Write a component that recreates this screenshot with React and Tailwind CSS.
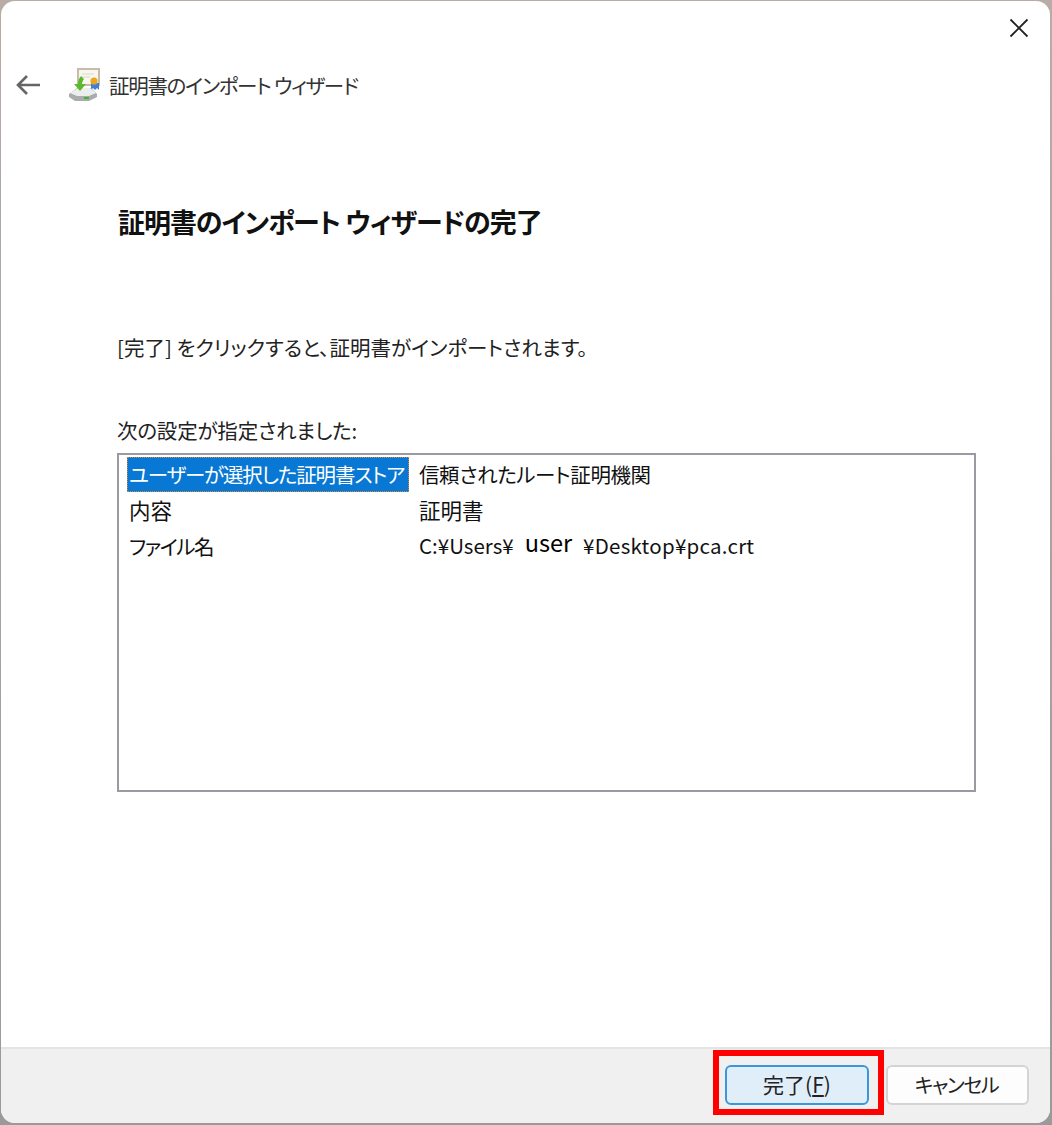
import React from 'react';

const jp = '[font-family:"Noto_Sans_CJK_JP","Noto_Sans",sans-serif] [font-feature-settings:"palt"]';

const rows = [
  { name: 'ユーザーが選択した証明書ストア', nameCls: 'pl-[1px] tracking-[-1.15px]', value: '信頼されたルート証明機関', valueCls: 'tracking-[-0.4px]', selected: true },
  { name: '内容', nameCls: 'pl-[2px] text-[21.5px]', value: '証明書', valueCls: 'text-[21.5px]' },
  { name: 'ファイル名', nameCls: 'pl-[2px] tracking-[-1.5px]', value: null, valueCls: '' },
];

const CertIcon = () => (
  <svg width="36" height="36" viewBox="0 0 36 36" className="blur-[0.5px]">
    <rect x="10" y="3" width="21" height="16" fill="#f8f6ef" stroke="#c6bcaa" strokeWidth="2" />
    <path d="M14 8h12M14 11h8" stroke="#ddd8cc" strokeWidth="1" />
    <path d="M23 17v7l2-2 2 2 2-2 2 2v-7z" fill="#3f7fd8" />
    <circle cx="26" cy="15" r="3.6" fill="#eda51f" />
    <path d="M1 28l8-6h14l6 6v3l-8 4H7l-6-4z" fill="#a9adad" />
    <path d="M2 27l8-5h12l6 5-7 3H9z" fill="#eceeee" />
    <rect x="16" y="31" width="5" height="2" fill="#45b035" />
    <path d="M13 10c-2 2-3 5-3 8H6l6 7 6-7h-4c0-2 1-4 2-5z" fill="#5cb82c" />
  </svg>
);

export default function App() {
  return (
    <div className={`w-[1052px] h-[1125px] bg-[#bdb0a8] ${jp}`}>
      <div className="w-full h-full pt-[1px] pb-[2px] pl-[1px] pr-[2px] bg-[linear-gradient(to_bottom,#b8aca6_0%,#9a9a9a_100%)]">
        <div className="w-full h-full flex flex-col bg-white rounded-[14px] overflow-hidden">
          <div className="flex justify-end pt-[17px] pr-[21px] h-[53px]">
            <svg width="20" height="20" viewBox="0 0 20 20" fill="none" stroke="#222" strokeWidth="1.8">
              <path d="M1.5 1.5l17 17M18.5 1.5l-17 17" />
            </svg>
          </div>

          <div className="flex items-center h-[62px] pl-[15px]">
            <svg width="26" height="22" viewBox="0 0 26 22" fill="none" stroke="#666" strokeWidth="2.6">
              <path d="M24 11H2M11 2l-9 9 9 9" />
            </svg>
            <div className="ml-[26px] mt-[-2px]"><CertIcon /></div>
            <span className="ml-[5px] text-[20.5px] tracking-[-1.3px] text-[#333]">証明書のインポート ウィザード</span>
          </div>

          <div className="flex-1 flex flex-col pl-[116px] pr-[74px]">
            <h1 className="mt-[86px] ml-[1px] text-[27px] leading-[40px] font-bold tracking-[-1.05px] text-[#111]">証明書のインポート ウィザードの完了</h1>
            <p className="mt-[89px] text-[20.5px] leading-[32px] text-[#222]">[完了] をクリックすると、証明書がインポートされます。</p>
            <p className="mt-[51px] text-[20.5px] leading-[32px] tracking-[-0.2px] text-[#222]">次の設定が指定されました:</p>
            <div className="mt-[7px] h-[339px] border-2 border-[#9a9aa2] px-[8px] py-[1px] text-[20.5px] text-[#111]">
              {rows.map((r) => (
                <div key={r.name} className="flex h-[36px] items-center">
                  <div className={`w-[282px] h-[35px] flex items-center whitespace-nowrap ${r.nameCls} ${r.selected ? 'bg-[#0878d4] text-white border border-dotted border-[#d98a30]' : ''}`}>
                    {r.name}
                  </div>
                  <div className={`ml-[10px] whitespace-nowrap ${r.valueCls}`}>
                    {r.value ?? (
                      <span className="inline-block -translate-y-[1px]">C:¥Users¥<span className="inline-block ml-[11px] mr-[11px] -translate-y-[2px] text-[23.5px] leading-[30px] text-black">user</span><span className="tracking-[0.25px]">¥Desktop¥pca.crt</span></span>
                    )}
                  </div>
                </div>
              ))}
            </div>
          </div>

          <div className="h-[76px] bg-[#f0f0f0] border-t-2 border-[#e4e4e4] flex justify-end pt-[16px] pr-[21px] gap-[17px]">
            <div className="relative">
              <button className="w-[144px] h-[40px] rounded-[6px] bg-[#e0eef9] border-2 border-[#3a96dd] text-[21px] text-[#222]">
                完了(<span className="underline">F</span>)
              </button>
              <div className="absolute left-[-12px] top-[-15px] w-[171px] h-[65px] border-[6px] border-[#ff0000]" />
            </div>
            <button className="w-[143px] h-[40px] rounded-[6px] bg-[#fdfdfd] border-2 border-[#d4d4d4] pr-[2px] text-[20px] tracking-[-1.4px] text-[#222]">
              キャンセル
            </button>
          </div>
        </div>
      </div>
    </div>
  );
}
